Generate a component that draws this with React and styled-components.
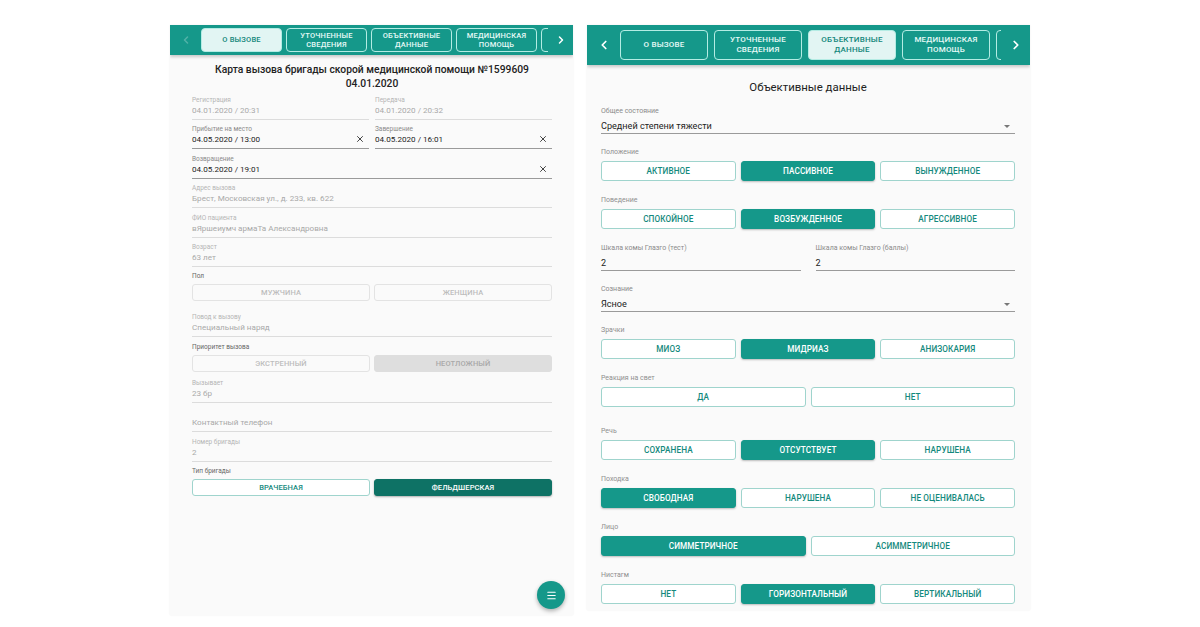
import React from 'react';
import styled, { createGlobalStyle, ThemeProvider } from 'styled-components';
import { ChevronLeft, ChevronRight, X, Menu } from 'lucide-react';

const TEAL = '#15988a';

const small = {
  labelFs: 6.5, labelLh: 8, labelGap: 0, valueFs: 8.1, valueLh: 12, valuePb: 3, fieldMb: 5.4,
  btnH: 17, btnFs: 7.5, btnGap: 4, groupGap: 4, groupMb: 10, groupLabel: '#666',
};
const large = {
  labelFs: 7, labelLh: 10, labelGap: 3, valueFs: 9.1, valueLh: 14, valuePb: 0, fieldMb: 13,
  btnH: 20, btnFs: 8.2, btnGap: 5, groupGap: 4, groupMb: 14, groupLabel: '#8f8f8f',
};

const GlobalStyle = createGlobalStyle`
  html, body { margin: 0; padding: 0; background: #fff; }
  body { font-family: Roboto, "Noto Sans", "Liberation Sans", sans-serif; }
`;

const Page = styled.div`
  width: 1200px;
  height: 627px;
  box-sizing: border-box;
  padding-top: 25px;
  display: flex;
  justify-content: center;
  align-items: flex-start;
  gap: 14px;
  overflow: hidden;
`;

const Phone = styled.div`
  position: relative;
  width: ${p => p.$w}px;
  height: ${p => p.$h}px;
  background: #fafafa;
  display: flex;
  flex-direction: column;
  overflow: hidden;
  box-shadow: 0 0 2px rgba(0, 0, 0, 0.07);
`;

const TabBar = styled.div`
  flex: none;
  height: ${p => p.$h}px;
  background: ${TEAL};
  display: flex;
  align-items: center;
  box-shadow: 0 2px 3px rgba(0, 0, 0, 0.2);
  position: relative;
  z-index: 1;
`;

const Arrow = styled.div`
  flex: none;
  width: ${p => p.$w}px;
  display: flex;
  align-items: center;
  justify-content: center;
  color: #fff;
  opacity: ${p => (p.$off ? 0.25 : 1)};
`;

const TabStrip = styled.div`
  flex: 1;
  min-width: 0;
  overflow: hidden;
  display: flex;
  align-items: center;
  gap: ${p => p.$gap}px;
`;

const Tab = styled.div`
  flex: none;
  width: ${p => p.$w}px;
  height: ${p => p.$h}px;
  box-sizing: border-box;
  border: 1px solid #b4ece4;
  border-radius: 4px;
  display: flex;
  align-items: center;
  justify-content: center;
  text-align: center;
  text-transform: uppercase;
  white-space: nowrap;
  font-size: ${p => p.$fs}px;
  font-weight: 500;
  line-height: 1.25;
  letter-spacing: 0.2px;
  color: ${p => (p.$active ? '#13877b' : '#e6faf7')};
  background: ${p => (p.$active ? '#e2f5f3' : 'transparent')};
`;

const Body = styled.div`
  flex: 1;
  padding: ${p => p.$pad};
`;

const Title = styled.h1`
  margin: 0 0 ${p => p.$mb}px;
  text-align: center;
  font-size: ${p => p.$fs}px;
  line-height: ${p => p.$lh}px;
  font-weight: ${p => p.$fw};
  color: #222;
`;

const Row = styled.div`
  display: flex;
  gap: ${p => p.$gap}px;
`;

const FieldBox = styled.div`
  flex: 1;
  min-width: 0;
  display: flex;
  flex-direction: column;
  margin-bottom: ${p => p.theme.fieldMb}px;
`;

const Label = styled.div`
  height: ${p => p.theme.labelLh}px;
  font-size: ${p => p.theme.labelFs}px;
  line-height: ${p => p.theme.labelLh}px;
  margin-bottom: ${p => p.theme.labelGap}px;
  color: ${p => (p.$dim ? '#b5b5b5' : '#8a8a8a')};
  white-space: nowrap;
`;

const ValueRow = styled.div`
  display: flex;
  align-items: center;
  justify-content: space-between;
  height: ${p => p.theme.valueLh}px;
  padding-bottom: ${p => p.theme.valuePb}px;
  border-bottom: 1px solid ${p => (p.$dim ? '#dcdcdc' : '#9a9a9a')};
  font-size: ${p => p.theme.valueFs}px;
  color: ${p => (p.$dim ? '#a9a9a9' : '#222')};
  white-space: nowrap;
`;

const ClearIcon = styled(X)`
  margin-right: 4px;
  color: #333;
`;

const Caret = styled.span`
  margin-right: 5px;
  width: 0;
  height: 0;
  border-left: 3px solid transparent;
  border-right: 3px solid transparent;
  border-top: 3px solid #777;
`;

const Group = styled.div`
  margin-bottom: ${p => p.$mb ?? p.theme.groupMb}px;
`;

const GroupLabel = styled(Label)`
  color: ${p => p.theme.groupLabel};
  margin-bottom: ${p => p.theme.groupGap}px;
`;

const Choices = styled.div`
  display: grid;
  grid-template-columns: repeat(${p => p.$cols}, 1fr);
  gap: ${p => p.theme.btnGap}px;
`;

const variants = {
  outline: { bg: '#fff', border: '#9fd4cd', color: '#14897d', shadow: 'none' },
  filled: { bg: TEAL, border: TEAL, color: '#fff', shadow: '0 1px 2px rgba(0,0,0,0.25)' },
  dark: { bg: '#0e7265', border: '#0e7265', color: '#fff', shadow: '0 1px 2px rgba(0,0,0,0.3)' },
  muted: { bg: 'transparent', border: '#e3e3e3', color: '#bdbdbd', shadow: 'none' },
  mutedFill: { bg: '#dedede', border: '#dedede', color: '#a9a9a9', shadow: 'none' },
};

const Choice = styled.div`
  height: ${p => p.theme.btnH}px;
  box-sizing: border-box;
  border-radius: 3px;
  display: flex;
  align-items: center;
  justify-content: center;
  text-transform: uppercase;
  font-size: ${p => p.theme.btnFs}px;
  font-weight: 500;
  letter-spacing: 0.1px;
  white-space: nowrap;
  background: ${p => variants[p.$v].bg};
  border: 1px solid ${p => variants[p.$v].border};
  color: ${p => variants[p.$v].color};
  box-shadow: ${p => variants[p.$v].shadow};
`;

const Fab = styled.div`
  position: absolute;
  right: 8px;
  bottom: 6px;
  width: 28px;
  height: 28px;
  border-radius: 50%;
  background: ${TEAL};
  color: #fff;
  display: flex;
  align-items: center;
  justify-content: center;
  box-shadow: 0 2px 4px rgba(0, 0, 0, 0.3);
`;

const Field = ({ label, value, dim, clear, select, placeholder }) => (
  <FieldBox>
    <Label $dim={dim}>{label}</Label>
    <ValueRow $dim={dim || placeholder}>
      <span>{value}</span>
      {clear && <ClearIcon size={10} strokeWidth={2.2} />}
      {select && <Caret />}
    </ValueRow>
  </FieldBox>
);

const ChoiceGroup = ({ label, items, mb }) => (
  <Group $mb={mb}>
    <GroupLabel>{label}</GroupLabel>
    <Choices $cols={items.length}>
      {items.map(([text, v]) => (
        <Choice key={text} $v={v}>{text}</Choice>
      ))}
    </Choices>
  </Group>
);

// the fifth tab is scrolled out of view, only its left border shows
const tabs = [['О вызове'], ['Уточненные', 'сведения'], ['Объективные', 'данные'], ['Медицинская', 'помощь'], []];

const Tabs = ({ h, tabH, tabW, gap, fs, active, leftW, rightW, leftOff, icon }) => (
  <TabBar $h={h}>
    <Arrow $w={leftW} $off={leftOff}><ChevronLeft size={icon} strokeWidth={3} /></Arrow>
    <TabStrip $gap={gap}>
      {tabs.map((lines, i) => (
        <Tab key={i} $w={tabW} $h={tabH} $fs={fs} $active={i === active}>
          {lines.map((w, j) => <React.Fragment key={j}>{j > 0 && <br />}{w}</React.Fragment>)}
        </Tab>
      ))}
    </TabStrip>
    <Arrow $w={rightW}><ChevronRight size={icon} strokeWidth={3} /></Arrow>
  </TabBar>
);

const CallCard = () => (
  <ThemeProvider theme={small}>
    <Phone $w={403} $h={590}>
      <Tabs h={30} tabH={24} tabW={81} gap={4} fs={7.5} active={0} leftW={31} rightW={25} leftOff icon={12} />
      <Body $pad="8px 21px 0 22px">
        <Title $fs={10.3} $lh={14} $fw={500} $mb={5}>
          Карта вызова бригады скорой медицинской помощи №1599609<br />04.01.2020
        </Title>
        <Row $gap={6}>
          <Field label="Регистрация" value="04.01.2020 / 20:31" dim />
          <Field label="Передача" value="04.01.2020 / 20:32" dim />
        </Row>
        <Row $gap={6}>
          <Field label="Прибытие на место" value="04.05.2020 / 13:00" clear />
          <Field label="Завершение" value="04.05.2020 / 16:01" clear />
        </Row>
        <Field label="Возвращение" value="04.05.2020 / 19:01" clear />
        <Field label="Адрес вызова" value="Брест, Московская ул., д. 233, кв. 622" dim />
        <Field label="ФИО пациента" value="вЯршеиумч армаТа Александровна" dim />
        <Field label="Возраст" value="63 лет" dim />
        <ChoiceGroup label="Пол" mb={12} items={[['Мужчина', 'muted'], ['Женщина', 'muted']]} />
        <Field label="Повод к вызову" value="Специальный наряд" dim />
        <ChoiceGroup label="Приоритет вызова" mb={7} items={[['Экстренный', 'muted'], ['Неотложный', 'mutedFill']]} />
        <Field label="Вызывает" value="23 бр" dim />
        <Field label="" value="Контактный телефон" placeholder />
        <Field label="Номер бригады" value="2" dim />
        <ChoiceGroup label="Тип бригады" items={[['Врачебная', 'outline'], ['Фельдшерская', 'dark']]} />
      </Body>
      <Fab><Menu size={11} strokeWidth={2.5} /></Fab>
    </Phone>
  </ThemeProvider>
);

const Objective = () => (
  <ThemeProvider theme={large}>
    <Phone $w={443} $h={585}>
      <Tabs h={40} tabH={30} tabW={88} gap={6} fs={8} active={2} leftW={33} rightW={29} icon={14} />
      <Body $pad="14px 15px 0 14px">
        <Title $fs={11.4} $lh={16} $fw={400} $mb={11}>Объективные данные</Title>
        <Field label="Общее состояние" value="Средней степени тяжести" select />
        <ChoiceGroup label="Положение" items={[['Активное', 'outline'], ['Пассивное', 'filled'], ['Вынужденное', 'outline']]} />
        <ChoiceGroup label="Поведение" items={[['Спокойное', 'outline'], ['Возбужденное', 'filled'], ['Агрессивное', 'outline']]} />
        <Row $gap={15}>
          <Field label="Шкала комы Глазго (тест)" value="2" />
          <Field label="Шкала комы Глазго (баллы)" value="2" />
        </Row>
        <Field label="Сознание" value="Ясное" select />
        <ChoiceGroup label="Зрачки" items={[['Миоз', 'outline'], ['Мидриаз', 'filled'], ['Анизокария', 'outline']]} />
        <ChoiceGroup label="Реакция на свет" mb={19} items={[['Да', 'outline'], ['Нет', 'outline']]} />
        <ChoiceGroup label="Речь" items={[['Сохранена', 'outline'], ['Отсутствует', 'filled'], ['Нарушена', 'outline']]} />
        <ChoiceGroup label="Походка" items={[['Свободная', 'filled'], ['Нарушена', 'outline'], ['Не оценивалась', 'outline']]} />
        <ChoiceGroup label="Лицо" items={[['Симметричное', 'filled'], ['Асимметричное', 'outline']]} />
        <ChoiceGroup label="Нистагм" items={[['Нет', 'outline'], ['Горизонтальный', 'filled'], ['Вертикальный', 'outline']]} />
      </Body>
    </Phone>
  </ThemeProvider>
);

export default function App() {
  return (
    <>
      <GlobalStyle />
      <Page>
        <CallCard />
        <Objective />
      </Page>
    </>
  );
}
